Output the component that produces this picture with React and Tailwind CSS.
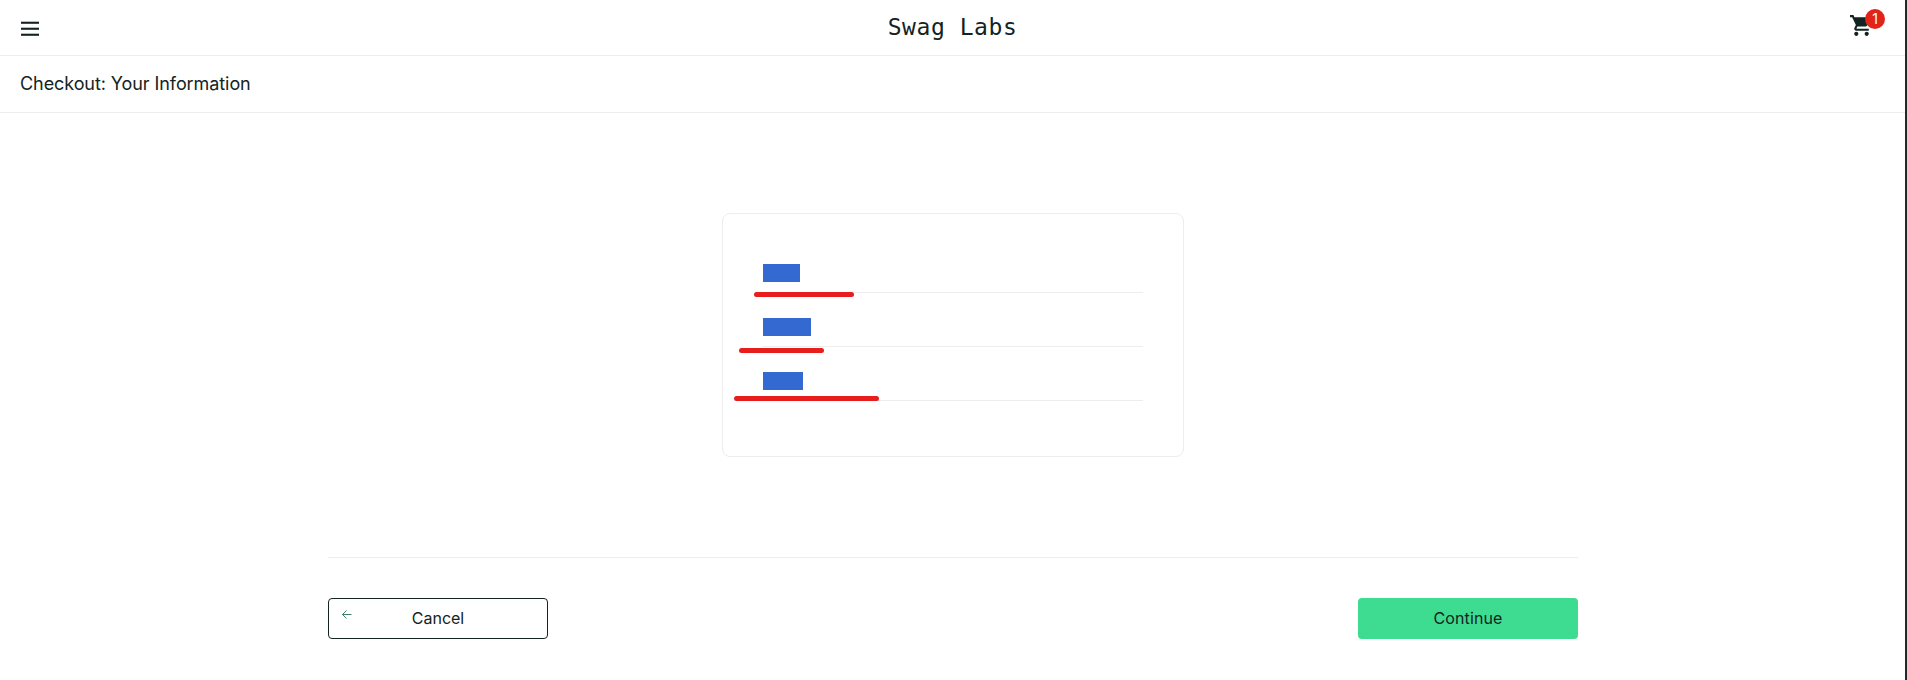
const rows = [
  { name: "First Name", mark: "w-[37px]", stroke: "left-[-9px] top-[28px] w-[100px]" },
  { name: "Last Name", mark: "w-[48px]", stroke: "left-[-24px] top-[30px] w-[85px]" },
  { name: "Postal Code", mark: "w-[40px]", stroke: "left-[-29px] top-[24px] w-[145px]" },
];

function Field({ name, mark, stroke }) {
  return (
    <div aria-label={name} className="relative h-[29px] w-full border-b border-[#ededed]">
      <div className={`h-[18px] bg-[#3369d1] ${mark}`} />
      <div className={`absolute h-[5px] rounded-full bg-[#e81e1e] ${stroke}`} />
    </div>
  );
}

export default function App() {
  return (
    <div className="h-[680px] w-[1907px] overflow-hidden border-r-2 border-[#242628] bg-white font-['Inter',sans-serif] text-[#132322]">
      <header className="flex h-14 items-center justify-between border-b border-[#ededed] pr-[22px] pl-5">
        <button className="w-[62px]" aria-label="Open menu">
          <svg width="20" height="18" viewBox="0 0 20 18" fill="#132322">
            <rect x="1" y="2.7" width="18" height="2.1" />
            <rect x="1" y="8.700" width="18" height="2.1" />
            <rect x="1" y="14.700" width="18" height="2.1" />
          </svg>
        </button>
        <div className="font-['DejaVu_Sans_Mono',monospace] text-[23px] tracking-[0.55px]">Swag Labs</div>
        <div className="relative flex h-10 w-[60px] justify-end">
          <svg className="mt-[5.5px] mr-[9px] shrink-0" width="25" height="25" viewBox="0 0 24 24" fill="#132322">
            <path d="M7 18c-1.100 0-2 .9-2 2s.9 2 2 2 2-.9 2-2-.9-2-2-2zM1 2v2h2l3.600 7.600-1.350 2.450C4.520 15.370 5.480 17 7 17h12v-2H7.420a.25.25 0 0 1-.25-.25l.03-.12.9-1.630h7.450c.75 0 1.410-.41 1.750-1.030l3.580-6.490A1 1 0 0 0 20 4H5.210l-.94-2H1zm16 16c-1.100 0-2 .9-2 2s.9 2 2 2 2-.9 2-2-.9-2-2-2z" />
          </svg>
          <span className="absolute top-[1.5px] right-[-2px] flex size-5 items-center justify-center rounded-full bg-[#e2231a] text-sm text-white">1</span>
        </div>
      </header>
      <div className="flex h-[57px] items-center border-b border-[#ededed] pl-5 text-lg tracking-[-0.08px]">
        <h1>Checkout: Your Information</h1>
      </div>
      <main className="flex flex-col pt-[100px]">
        <section className="ml-[722px] flex h-[244px] w-[462px] flex-col gap-[25px] rounded-lg border border-[#ededed] px-10 pt-[50px]">
          {rows.map((row) => (
            <Field key={row.name} {...row} />
          ))}
        </section>
        <footer className="mt-[100px] ml-[328px] flex w-[1250px] justify-between border-t border-[#ededed] pt-10">
          <button className="relative h-[41px] w-[220px] rounded border border-[#132322] pb-0.5 text-base">
            <svg className="absolute top-[10px] left-[12px]" width="12" height="12" viewBox="0 0 12 12" fill="none" stroke="#3f8068" strokeWidth="1">
              <path d="M10.500 5.500H1.500M5.500 1.500l-4 4 4 4" />
            </svg>
            Cancel
          </button>
          <button className="h-[41px] w-[220px] rounded bg-[#3ddc91] pb-0.5 text-base tracking-[0.1px]">Continue</button>
        </footer>
      </main>
    </div>
  );
}
